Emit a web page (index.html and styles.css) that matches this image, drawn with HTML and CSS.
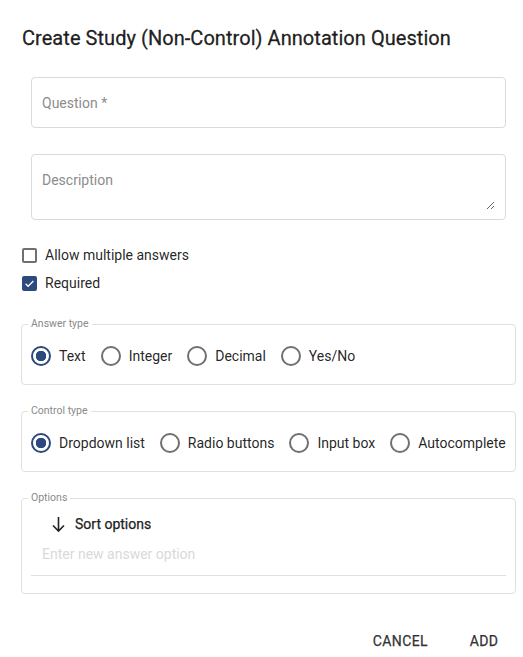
FILE: index.html
```html
<!DOCTYPE html>
<html lang="en">
<head>
    <meta charset="UTF-8">
    <meta name="viewport" content="width=device-width, initial-scale=1.0">
    <title>Create Study Annotation Question</title>
    <link rel="stylesheet" href="styles.css">
</head>
<body>
    <div class="dialog">
        <h2 class="dialog-title">Create Study (Non-Control) Annotation Question</h2>

        <input class="text-field question" type="text" placeholder="Question *">
        <div class="text-field description">
            <textarea placeholder="Description"></textarea>
        </div>

        <div class="checks">
            <label class="check">
                <span class="box"></span>
                Allow multiple answers
            </label>
            <label class="check">
                <span class="box on">
                    <svg width="13" height="13" viewBox="0 0 24 24"><path d="M3.5 12.5l5.5 5.5L20.5 6.5" fill="none" stroke="#fff" stroke-width="2.8"/></svg>
                </span>
                Required
            </label>
        </div>

        <fieldset class="group">
            <legend>Answer type</legend>
            <div class="radio-row">
                <label class="radio"><span class="dot on"></span>Text</label>
                <label class="radio"><span class="dot"></span>Integer</label>
                <label class="radio"><span class="dot"></span>Decimal</label>
                <label class="radio"><span class="dot"></span>Yes/No</label>
            </div>
        </fieldset>

        <fieldset class="group">
            <legend>Control type</legend>
            <div class="radio-row">
                <label class="radio"><span class="dot on"></span>Dropdown list</label>
                <label class="radio"><span class="dot"></span>Radio buttons</label>
                <label class="radio"><span class="dot"></span>Input box</label>
                <label class="radio"><span class="dot"></span>Autocomplete</label>
            </div>
        </fieldset>

        <fieldset class="group options">
            <legend>Options</legend>
            <button class="sort-btn" type="button">
                <svg width="13" height="17" viewBox="0 0 13 17"><path d="M6.5 1v14M1 9.5l5.5 5.5L12 9.5" fill="none" stroke="#222" stroke-width="1.6"/></svg>
                Sort options
            </button>
            <input class="option-input" type="text" placeholder="Enter new answer option">
        </fieldset>

        <div class="actions">
            <button class="text-btn" type="button">Cancel</button>
            <button class="text-btn" type="button">Add</button>
        </div>
    </div>
</body>
</html>
```

FILE: styles.css
```css
body {
    margin: 0;
    background: #fff;
    font-family: Roboto, "Liberation Sans", sans-serif;
    color: rgba(0, 0, 0, 0.87);
}
.dialog {
    padding: 22px 7px 0 21px;
}
.dialog-title {
    margin: 0 0 0 1px;
    font-size: 20px;
    font-weight: 400;
    line-height: 32px;
    letter-spacing: 0.05px;
    -webkit-text-stroke: 0.3px currentColor;
}

/* outlined text fields */
.text-field {
    display: block;
    box-sizing: border-box;
    width: calc(100% - 20px);
    margin: 23px 10px 0;
    border: 1px solid #dadada;
    border-radius: 4px;
    padding: 0 10px;
    font-family: inherit;
    font-size: 14px;
    color: inherit;
    outline: none;
}
.text-field::placeholder,
.description textarea::placeholder {
    color: #8c8c8c;
}
.question {
    height: 51px;
}
.description {
    height: 66px;
    margin-top: 26px;
    padding: 15px 10px 10px;
}
.description textarea {
    display: block;
    box-sizing: border-box;
    width: 100%;
    height: 40px;
    margin: 0;
    padding: 0;
    border: none;
    font-family: inherit;
    font-size: 14px;
    line-height: 20px;
    resize: vertical;
    outline: none;
}

/* checkboxes */
.checks {
    margin-top: 21px;
}
.check {
    display: flex;
    align-items: center;
    gap: 8px;
    height: 28px;
    margin-left: 1px;
    font-size: 14px;
}
.box {
    box-sizing: border-box;
    width: 15px;
    height: 15px;
    border: 2px solid #707070;
    border-radius: 2px;
    display: flex;
    align-items: center;
    justify-content: center;
}
.box.on {
    background: #2c4a7d;
    border-color: #2c4a7d;
}

/* grouped sections */
.group {
    margin: 21px 0 0;
    padding: 11px 0 13px;
    border: 1px solid #e0e0e0;
    border-radius: 4px;
    min-width: 0;
}
.group + .group {
    margin-top: 20px;
}
.group legend {
    margin-left: 6px;
    padding: 0 3px;
    font-size: 10.5px;
    line-height: 12px;
    color: #8a8a8a;
}
.radio-row {
    display: flex;
    gap: 15px;
    padding-left: 9px;
    height: 30px;
}
.radio {
    display: flex;
    align-items: center;
    gap: 8px;
    font-size: 14px;
    white-space: nowrap;
}
.dot {
    box-sizing: border-box;
    width: 20px;
    height: 20px;
    border: 2px solid #707070;
    border-radius: 50%;
}
.dot.on {
    border-color: #2c4a7d;
    background: radial-gradient(circle, #2c4a7d 0 5px, transparent 5.5px);
}

/* options list */
.options {
    padding: 5px 0 17px;
}
.sort-btn {
    display: flex;
    align-items: center;
    gap: 10px;
    height: 30px;
    margin: 0;
    padding: 0 0 0 30px;
    border: none;
    background: none;
    font-family: inherit;
    font-size: 14px;
    font-weight: 400;
    color: #222;
    -webkit-text-stroke: 0.25px currentColor;
}
.option-input {
    display: block;
    box-sizing: border-box;
    width: calc(100% - 18px);
    margin: 0 9px;
    padding: 5px 11px 11px;
    border: none;
    border-bottom: 1px solid #e0e0e0;
    font-family: inherit;
    font-size: 14px;
    line-height: 20px;
    outline: none;
}
.option-input::placeholder {
    color: #d9d9d9;
}

/* dialog buttons */
.actions {
    display: flex;
    justify-content: flex-end;
    gap: 16px;
    margin-top: 29px;
}
.text-btn {
    min-width: 64px;
    height: 36px;
    padding: 0 8px;
    border: none;
    background: none;
    font-family: inherit;
    font-size: 14px;
    font-weight: 400;
    letter-spacing: 0.4px;
    text-transform: uppercase;
    color: #333;
    -webkit-text-stroke: 0.25px currentColor;
}
```
